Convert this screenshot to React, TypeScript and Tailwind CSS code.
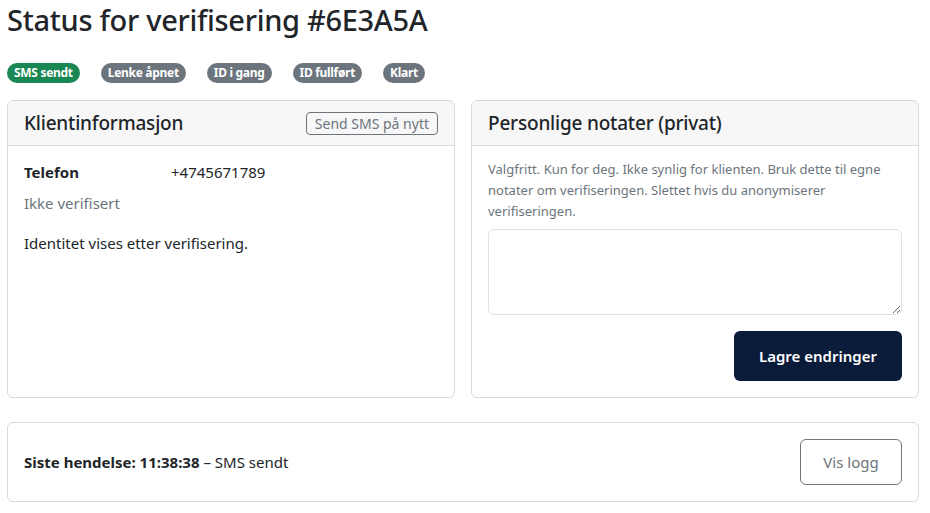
export default function App() {
    const steps = [
        { label: 'SMS sendt', done: true },
        { label: 'Lenke åpnet', done: false },
        { label: 'ID i gang', done: false },
        { label: 'ID fullført', done: false },
        { label: 'Klart', done: false },
    ];

    return (
        <div className="min-h-screen bg-white pl-[7px] pr-[11px] pt-[2px] font-['Noto_Sans',sans-serif] text-[#212529]">
            {/* Title */}
            <h1 className="text-[29px] font-medium leading-[36px] tracking-[-0.3px]">
                Status for verifisering #6E3A5A
            </h1>

            {/* Progress badges */}
            <div className="mt-[25px] flex items-center gap-[21px]">
                {steps.map((s) => (
                    <span
                        key={s.label}
                        className={`rounded-full px-[7px] py-[4px] text-[12px] font-bold leading-[12px] tracking-[-0.3px] text-white ${s.done ? 'bg-[#198754]' : 'bg-[#6c757d]'}`}
                    >
                        {s.label}
                    </span>
                ))}
            </div>

            {/* Cards */}
            <div className="mt-[17px] grid grid-cols-2 gap-4">
                {/* Left: Client info */}
                <div className="flex flex-col rounded-md border border-[#d9d9d9]">
                    <div className="flex items-center justify-between rounded-t-md border-b border-[#d9d9d9] bg-[#f7f7f7] px-4 py-[10px]">
                        <h5 className="text-[19px] font-medium leading-[24px] tracking-[-0.2px]">Klientinformasjon</h5>
                        <button className="rounded-[4px] border border-[#6c757d] px-[8px] text-[14px] leading-[21px] text-[#6c757d]">
                            Send SMS på nytt
                        </button>
                    </div>
                    <div className="px-4 pb-4 pt-[14px] text-[15px] leading-[24px]">
                        <div className="flex">
                            <span className="w-[147px] font-bold">Telefon</span>
                            <span>+4745671789</span>
                        </div>
                        <div className="mt-[7px] text-[#6c757d]">Ikke verifisert</div>
                        <p className="mt-4">Identitet vises etter verifisering.</p>
                    </div>
                </div>

                {/* Right: Private notes */}
                <div className="flex flex-col rounded-md border border-[#d9d9d9]">
                    <div className="rounded-t-md border-b border-[#d9d9d9] bg-[#f7f7f7] px-4 py-[10px]">
                        <h5 className="text-[19px] font-medium leading-[24px] tracking-[-0.2px]">Personlige notater (privat)</h5>
                    </div>
                    <div className="px-4 pb-4 pt-[13px]">
                        <p className="text-[13px] leading-[21px] text-[#6c757d]">
                            Valgfritt. Kun for deg. Ikke synlig for klienten. Bruk dette til egne notater om verifiseringen. Slettet hvis du anonymiserer verifiseringen.
                        </p>
                        <textarea className="mt-[7px] block h-[86px] w-full rounded-md border border-[#dee2e6] p-2 text-[15px]" />
                        <div className="mt-4 flex justify-end">
                            <button className="h-[50px] rounded-md bg-[#0a1c3a] px-[25px] text-[15px] font-semibold text-white">
                                Lagre endringer
                            </button>
                        </div>
                    </div>
                </div>
            </div>

            {/* Last event */}
            <div className="mt-6 flex items-center justify-between rounded-md border border-[#d9d9d9] p-4">
                <p className="text-[15px]">
                    <span className="font-bold">Siste hendelse: 11:38:38</span> – SMS sendt
                </p>
                <button className="h-[46px] w-[102px] rounded-md border border-[#6c757d] text-[15px] text-[#6c757d]">
                    Vis logg
                </button>
            </div>
        </div>
    );
}
